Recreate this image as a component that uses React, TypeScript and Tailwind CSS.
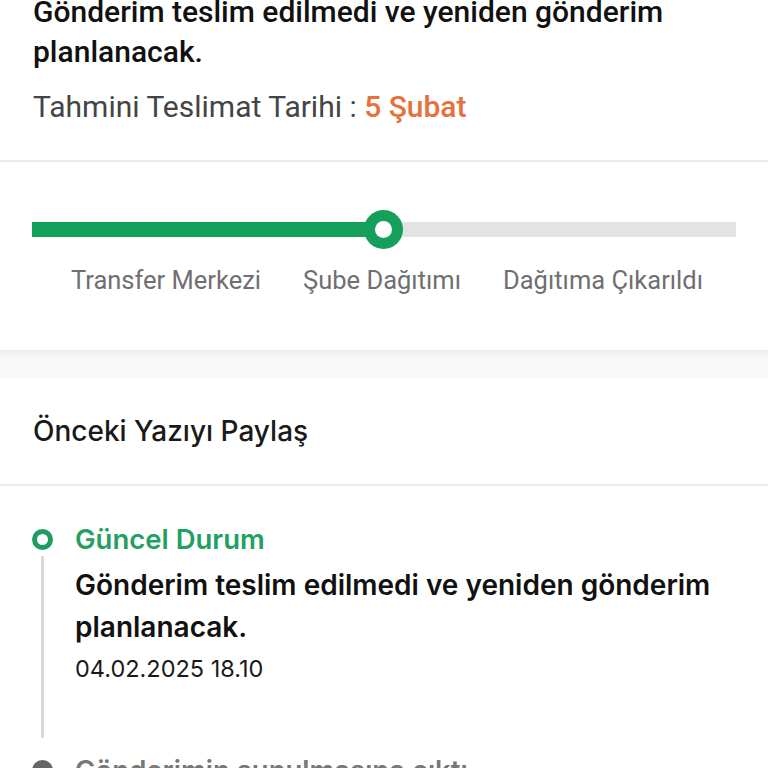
import React from "react";

export default function App() {
  return (
    <div className="w-[768px] h-[768px] overflow-hidden bg-white relative">
      {/* Top summary */}
      <div className="pl-[33px] pr-[20px] pt-0 pb-[35px] bg-white" style={{ fontFamily: "Roboto, 'Noto Sans', sans-serif" }}>
        <div className="-mt-[8px] text-[30px] leading-[40px] font-medium text-[#111]">
          Gönderim teslim edilmedi ve yeniden gönderim planlanacak.
        </div>
        <div className="mt-[17px] text-[30px] leading-[36px] text-[#444]">
          Tahmini Teslimat Tarihi : <span className="text-[#e8703a] font-medium">5 Şubat</span>
        </div>
      </div>
      <div className="h-[2px] bg-[#ececec]" />

      {/* Progress */}
      <div className="relative bg-white pt-[60px] pb-[54px] shadow-[0_3px_6px_rgba(0,0,0,0.06)]" style={{ fontFamily: "Roboto, 'Noto Sans', sans-serif" }}>
        <div className="mx-[32px] relative h-[15px] bg-[#e3e3e4]">
          <div className="absolute left-0 top-0 h-full w-[351px] bg-[#14a05a]" />
          <div className="absolute left-[332px] top-[-12px] w-[39px] h-[39px] rounded-full bg-[#14a05a] flex items-center justify-center">
            <div className="w-[17px] h-[17px] rounded-full bg-white" />
          </div>
        </div>
        <div className="mt-[27px] flex justify-center gap-[42px] pl-[6px] text-[25.5px] leading-[32px] text-[#6f6f72]">
          <span>Transfer Merkezi</span>
          <span>Şube Dağıtımı</span>
          <span>Dağıtıma Çıkarıldı</span>
        </div>
      </div>
      <div className="h-[28px] bg-[#f8f8f8]" />

      {/* Timeline card */}
      <div className="bg-white" style={{ fontFamily: "Inter, 'Noto Sans', sans-serif" }}>
        <div className="h-[106px] flex items-center pl-[33px] text-[28px] font-medium text-[#1a1a1a]">
          Önceki Yazıyı Paylaş
        </div>
        <div className="h-[2px] bg-[#ededed]" />
        <div className="pl-[32px] pt-[37px]">
          <div className="flex">
            <div className="w-[21px] flex flex-col items-center shrink-0">
              <div className="mt-[6px] w-[21px] h-[21px] rounded-full border-[5px] border-[#1e9d5f] bg-white" />
              <div className="mt-[6px] w-[3px] h-[182px] bg-[#d9d9d9]" />
            </div>
            <div className="ml-[22px] flex flex-col">
              <div className="text-[27.5px] leading-[32px] font-semibold text-[#239f63]">Güncel Durum</div>
              <div className="mt-[9px] text-[28px] leading-[42px] font-semibold text-[#111] pr-[30px]">
                Gönderim teslim edilmedi ve yeniden gönderim planlanacak.
              </div>
              <div className="mt-[6px] text-[23.5px] leading-[30px] text-[#1a1a1a]">04.02.2025 18.10</div>
            </div>
          </div>
          <div className="flex mt-[16px]">
            <div className="w-[21px] shrink-0">
              <div className="mt-[6px] w-[21px] h-[21px] rounded-full bg-[#666] flex items-center justify-center">
                <svg width="12" height="12" viewBox="0 0 12 12"><path d="M2.5 6.2l2.3 2.3 4.7-4.8" stroke="#fff" strokeWidth="1.8" fill="none" /></svg>
              </div>
            </div>
            <div className="ml-[22px] text-[27.5px] leading-[32px] font-semibold text-[#777]">Gönderimin sunulmasına çıktı</div>
          </div>
        </div>
      </div>
    </div>
  );
}
